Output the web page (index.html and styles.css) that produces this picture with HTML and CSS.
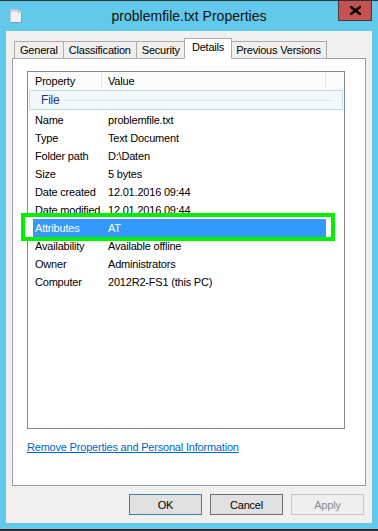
FILE: index.html
```html
<!DOCTYPE html>
<html lang="en">
<head>
    <meta charset="UTF-8">
    <meta name="viewport" content="width=device-width, initial-scale=1.0">
    <title>problemfile.txt Properties</title>
    <link rel="stylesheet" href="styles.css">
</head>
<body>
    <div class="window">
        <div class="titlebar">
            <svg class="title-icon" width="12" height="14" viewBox="0 0 12 14">
                <path d="M0.5 0.5 H8.5 L11.5 3.5 V13.5 H0.5 Z" fill="#eef2f5" stroke="#b8c4cc"/>
                <rect x="1" y="1" width="7" height="2" fill="#d4d8db"/>
                <path d="M8.5 0.5 V3.5 H11.5" fill="#cfd6db" stroke="#b8c4cc"/>
                <path d="M11.5 4 V13.5 H1" fill="none" stroke="#7f9aa8"/>
            </svg>
            <span class="title-text">problemfile.txt Properties</span>
            <button class="close-button" title="Close">
                <svg width="11" height="9" viewBox="0 0 11 9">
                    <path d="M1 1 L10 8 M10 1 L1 8" stroke="#000" stroke-width="2.4" stroke-linecap="square"/>
                </svg>
            </button>
        </div>

        <div class="client">
            <div class="tabs">
                <div class="tab">General</div>
                <div class="tab">Classification</div>
                <div class="tab">Security</div>
                <div class="tab tab-active">Details</div>
                <div class="tab">Previous Versions</div>
            </div>

            <div class="tab-panel">
                <div class="listview">
                    <div class="lv-header">
                        <div class="lv-col lv-col-prop">Property</div>
                        <div class="lv-col lv-col-value">Value</div>
                    </div>

                    <div class="lv-group">
                        <span class="lv-group-name">File</span>
                        <span class="lv-group-line"></span>
                    </div>

                    <div class="lv-row"><span class="lv-prop">Name</span><span>problemfile.txt</span></div>
                    <div class="lv-row"><span class="lv-prop">Type</span><span>Text Document</span></div>
                    <div class="lv-row"><span class="lv-prop">Folder path</span><span>D:\Daten</span></div>
                    <div class="lv-row"><span class="lv-prop">Size</span><span>5 bytes</span></div>
                    <div class="lv-row"><span class="lv-prop">Date created</span><span>12.01.2016 09:44</span></div>
                    <div class="lv-row"><span class="lv-prop">Date modified</span><span>12.01.2016 09:44</span></div>
                    <div class="lv-row lv-row-selected lv-row-flagged"><span class="lv-prop">Attributes</span><span>AT</span></div>
                    <div class="lv-row"><span class="lv-prop">Availability</span><span>Available offline</span></div>
                    <div class="lv-row"><span class="lv-prop">Owner</span><span>Administrators</span></div>
                    <div class="lv-row"><span class="lv-prop">Computer</span><span>2012R2-FS1 (this PC)</span></div>
                </div>

                <a href="#" class="remove-link">Remove Properties and Personal Information</a>
            </div>

            <div class="dialog-buttons">
                <button class="btn btn-default">OK</button>
                <button class="btn btn-focus">Cancel</button>
                <button class="btn" disabled>Apply</button>
            </div>
        </div>
    </div>
</body>
</html>
```

FILE: styles.css
```css
* {
    margin: 0;
    padding: 0;
    box-sizing: border-box;
}

body {
    font-family: "Liberation Sans", Arial, sans-serif;
    font-size: 11px;
    letter-spacing: -0.2px;
    color: #000;
    background: #63c9ea;
}

.window {
    width: 378px;
    height: 531px;
    background: #63c9ea;
    border-top: 1px solid #2e3438;
    border-bottom: 2px solid #2b2b2b;
    padding: 0 6px 6px;
    display: flex;
    flex-direction: column;
}

/* title bar */
.titlebar {
    height: 30px;
    flex-shrink: 0;
    display: grid;
    grid-template-columns: 1fr auto 1fr;
}

.title-icon {
    margin: 8px 0 0 4px;
}

.title-text {
    font-size: 14px;
    letter-spacing: 0;
    line-height: 30px;
    color: #111;
}

.close-button {
    justify-self: end;
    width: 34px;
    height: 20px;
    background: #c75050;
    border: 1px solid #3e3e3e;
    border-top: none;
    display: flex;
    align-items: center;
    justify-content: center;
}

/* dialog body */
.client {
    flex: 1;
    background: #f0f0f0;
    padding: 7px 6px 0;
}

.tabs {
    display: flex;
    align-items: flex-end;
    height: 21px;
    margin-bottom: -1px;
    padding-left: 2px;
}

.tab {
    height: 18px;
    line-height: 16px;
    padding: 0 5px;
    background: #f0f0f0;
    border: 1px solid #acacac;
    margin-left: -1px;
}

.tab:first-child {
    margin-left: 0;
}

.tab-active {
    position: relative;
    z-index: 1;
    height: 21px;
    line-height: 17px;
    padding: 0 7px;
    margin: 0 -1px 0 -2px;
    background: #fff;
    border-bottom-color: #fff;
}

.tab-panel {
    height: 428px;
    background: #fff;
    border: 1px solid #9d9da3;
    padding: 12px 0 0 14px;
}

/* details list */
.listview {
    width: 318px;
    height: 358px;
    border: 1px solid #828790;
}

.lv-header {
    display: flex;
    height: 17px;
    background: #fcfcfc;
}

.lv-col {
    line-height: 18px;
    border-right: 1px solid #e5e5e5;
}

.lv-col-prop {
    width: 74px;
    padding-left: 7px;
}

.lv-col-value {
    width: 224px;
    padding-left: 6px;
}

.lv-group {
    display: flex;
    align-items: center;
    height: 20px;
    margin: 1px 1px;
    padding: 0 8px 0 11px;
    background: #f3f8fe;
    border: 1px solid #bcdcf4;
    color: #1e3287;
}

.lv-group-name {
    font-size: 12px;
}

.lv-group-line {
    flex: 1;
    height: 1px;
    margin-left: 5px;
    background: #e0e5ec;
}

.lv-row {
    display: grid;
    grid-template-columns: 75px 1fr;
    width: 293px;
    height: 18px;
    line-height: 18px;
    margin-left: 5px;
    white-space: nowrap;
}

.lv-prop {
    padding-left: 2px;
}

.lv-row-selected {
    background: #3399ff;
    color: #fff;
}

/* green annotation frame drawn over the row */
.lv-row-flagged {
    position: relative;
}

.lv-row-flagged::after {
    content: "";
    position: absolute;
    left: -12px;
    top: -6px;
    right: -9px;
    bottom: -4px;
    border: 4px solid #00f000;
    box-shadow: inset 4px 0 #fff;
}

.remove-link {
    display: inline-block;
    margin-top: 11px;
    line-height: 14px;
    color: #0066cc;
    text-decoration: underline;
}

/* buttons */
.dialog-buttons {
    display: flex;
    justify-content: flex-end;
    gap: 8px;
    padding: 8px 2px 0 0;
}

.btn {
    width: 73px;
    height: 21px;
    font-family: inherit;
    font-size: 11px;
    letter-spacing: -0.2px;
    color: #000;
    background: #e1e1e1;
    border: 1px solid #adadad;
}

.btn-default {
    border-color: #3c7fb1;
}

.btn-focus {
    border-color: #707070;
}

.btn:disabled {
    color: #8c8c8c;
    background: #efefef;
    border-color: #c4c4c4;
}
```
